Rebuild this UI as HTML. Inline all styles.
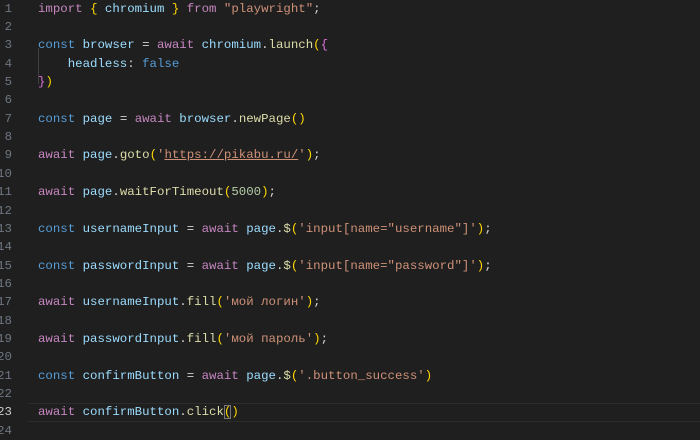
<!DOCTYPE html><html><head><style>
body{margin:0;background:#1f1f1f;width:700px;height:434px;overflow:hidden;position:relative;font-family:"Liberation Mono",monospace;font-size:12.4px;}
.l{position:absolute;left:0;height:18.36px;line-height:18.36px;white-space:pre;width:700px}
.n{position:absolute;right:688px;color:#6e7681;text-align:right}
.c{position:absolute;left:38px;color:#9cdcfe}
.k{color:#c586c0}.b{color:#569cd6}.f{color:#dcdcaa}.s{color:#ce9178}.y{color:#ffd700}.p{color:#da70d6}.w{color:#d4d4d4}.m{color:#b5cea8}
.u{text-decoration:underline}
</style></head><body>
<div style="position:absolute;left:28px;top:403px;width:672px;height:17px;border-top:1px solid #2c2c2c;border-bottom:1px solid #2c2c2c"></div>
<div style="position:absolute;left:38px;top:48px;width:1px;height:36px;background:#404040"></div>
<div class="l" style="top:-0.5px"><span class="n">1</span><span class="c"><span class="k">import</span> <span class="y">{</span> chromium <span class="y">}</span> <span class="k">from</span> <span class="s">"playwright"</span><span class="w">;</span></span></div>
<div class="l" style="top:17.9px"><span class="n">2</span></div>
<div class="l" style="top:36.2px"><span class="n">3</span><span class="c"><span class="b">const</span> browser <span class="w">=</span> <span class="k">await</span> chromium<span class="w">.</span><span class="f">launch</span><span class="y">(</span><span class="p">{</span></span></div>
<div class="l" style="top:54.6px"><span class="n">4</span><span class="c">    headless<span class="w">:</span> <span class="b">false</span></span></div>
<div class="l" style="top:72.9px"><span class="n">5</span><span class="c"><span class="p">}</span><span class="y">)</span></span></div>
<div class="l" style="top:91.3px"><span class="n">6</span></div>
<div class="l" style="top:109.7px"><span class="n">7</span><span class="c"><span class="b">const</span> page <span class="w">=</span> <span class="k">await</span> browser<span class="w">.</span><span class="f">newPage</span><span class="y">()</span></span></div>
<div class="l" style="top:128px"><span class="n">8</span></div>
<div class="l" style="top:146.4px"><span class="n">9</span><span class="c"><span class="k">await</span> page<span class="w">.</span><span class="f">goto</span><span class="y">(</span><span class="s">'<span class="u">https://pikabu.ru/</span>'</span><span class="y">)</span><span class="w">;</span></span></div>
<div class="l" style="top:164.7px"><span class="n">10</span></div>
<div class="l" style="top:183.1px"><span class="n">11</span><span class="c"><span class="k">await</span> page<span class="w">.</span><span class="f">waitForTimeout</span><span class="y">(</span><span class="m">5000</span><span class="y">)</span><span class="w">;</span></span></div>
<div class="l" style="top:201.5px"><span class="n">12</span></div>
<div class="l" style="top:219.8px"><span class="n">13</span><span class="c"><span class="b">const</span> usernameInput <span class="w">=</span> <span class="k">await</span> page<span class="w">.</span><span class="f">$</span><span class="y">(</span><span class="s">'input[name="username"]'</span><span class="y">)</span><span class="w">;</span></span></div>
<div class="l" style="top:238.2px"><span class="n">14</span></div>
<div class="l" style="top:256.5px"><span class="n">15</span><span class="c"><span class="b">const</span> passwordInput <span class="w">=</span> <span class="k">await</span> page<span class="w">.</span><span class="f">$</span><span class="y">(</span><span class="s">'input[name="password"]'</span><span class="y">)</span><span class="w">;</span></span></div>
<div class="l" style="top:274.9px"><span class="n">16</span></div>
<div class="l" style="top:293.3px"><span class="n">17</span><span class="c"><span class="k">await</span> usernameInput<span class="w">.</span><span class="f">fill</span><span class="y">(</span><span class="s">'мой логин'</span><span class="y">)</span><span class="w">;</span></span></div>
<div class="l" style="top:311.6px"><span class="n">18</span></div>
<div class="l" style="top:330px"><span class="n">19</span><span class="c"><span class="k">await</span> passwordInput<span class="w">.</span><span class="f">fill</span><span class="y">(</span><span class="s">'мой пароль'</span><span class="y">)</span><span class="w">;</span></span></div>
<div class="l" style="top:348.3px"><span class="n">20</span></div>
<div class="l" style="top:366.7px"><span class="n">21</span><span class="c"><span class="b">const</span> confirmButton <span class="w">=</span> <span class="k">await</span> page<span class="w">.</span><span class="f">$</span><span class="y">(</span><span class="s">'.button_success'</span><span class="y">)</span></span></div>
<div class="l" style="top:385.1px"><span class="n">22</span></div>
<div class="l" style="top:403.4px"><span class="n" style="color:#cccccc">23</span><span class="c"><span class="k">await</span> confirmButton<span class="w">.</span><span class="f">click</span><span class="y" style="outline:1px solid #777;outline-offset:-1px">(</span><span class="y">)</span></span></div>
<div class="l" style="top:421.8px"><span class="n">24</span></div>
</body></html>
